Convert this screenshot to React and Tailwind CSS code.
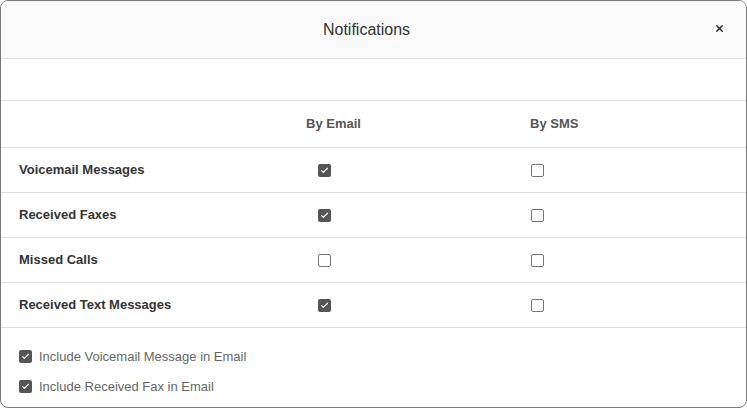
import { Check, X } from 'lucide-react'

const rows = [
  { label: 'Voicemail Messages', email: true, sms: false },
  { label: 'Received Faxes', email: true, sms: false },
  { label: 'Missed Calls', email: false, sms: false },
  { label: 'Received Text Messages', email: true, sms: false },
]

function Box({ checked }) {
  if (checked) {
    return (
      <span className="flex h-[13px] w-[13px] items-center justify-center rounded-[2px] bg-[#555]">
        <Check className="h-[9px] w-[9px] text-white" strokeWidth={3} />
      </span>
    )
  }
  return <span className="block h-[13px] w-[13px] rounded-[2px] border border-[#767676] bg-white" />
}

export default function App() {
  return (
    <div className="h-[408px] w-[747px] font-['Liberation_Sans',Arial,sans-serif]">
      <div className="flex h-full flex-col overflow-hidden rounded-[8px] border border-[#7a7a7a] bg-white">
        <div className="relative flex h-[58px] shrink-0 items-center justify-center border-b border-[#dedede] bg-[#fafafa] pr-[14px]">
          <span className="text-[16px] text-[#333]">Notifications</span>
          <X className="absolute right-[21px] top-[22px] h-[11px] w-[11px] text-[#222]" strokeWidth={3} />
        </div>
        <div className="h-[42px] shrink-0 border-b border-[#dedede]" />
        <div className="grid h-[47px] shrink-0 grid-cols-[305px_224px_1fr] items-center border-b border-[#dedede] text-[13px] font-bold text-[#555]">
          <span />
          <span>By Email</span>
          <span>By SMS</span>
        </div>
        {rows.map((r) => (
          <div
            key={r.label}
            className="grid h-[45px] shrink-0 grid-cols-[305px_224px_1fr] items-center border-b border-[#dedede] text-[13px]"
          >
            <span className="pl-[18px] font-bold text-[#333]">{r.label}</span>
            <span className="pl-[12px]">
              <Box checked={r.email} />
            </span>
            <span className="pl-[1px]">
              <Box checked={r.sms} />
            </span>
          </div>
        ))}
        <div className="flex flex-col gap-[10px] pl-[18px] pt-[19px] text-[13px] text-[#666]">
          <label className="flex items-center gap-[7px]">
            <Box checked />
            <span>Include Voicemail Message in Email</span>
          </label>
          <label className="flex items-center gap-[7px]">
            <Box checked />
            <span>Include Received Fax in Email</span>
          </label>
        </div>
      </div>
    </div>
  )
}
